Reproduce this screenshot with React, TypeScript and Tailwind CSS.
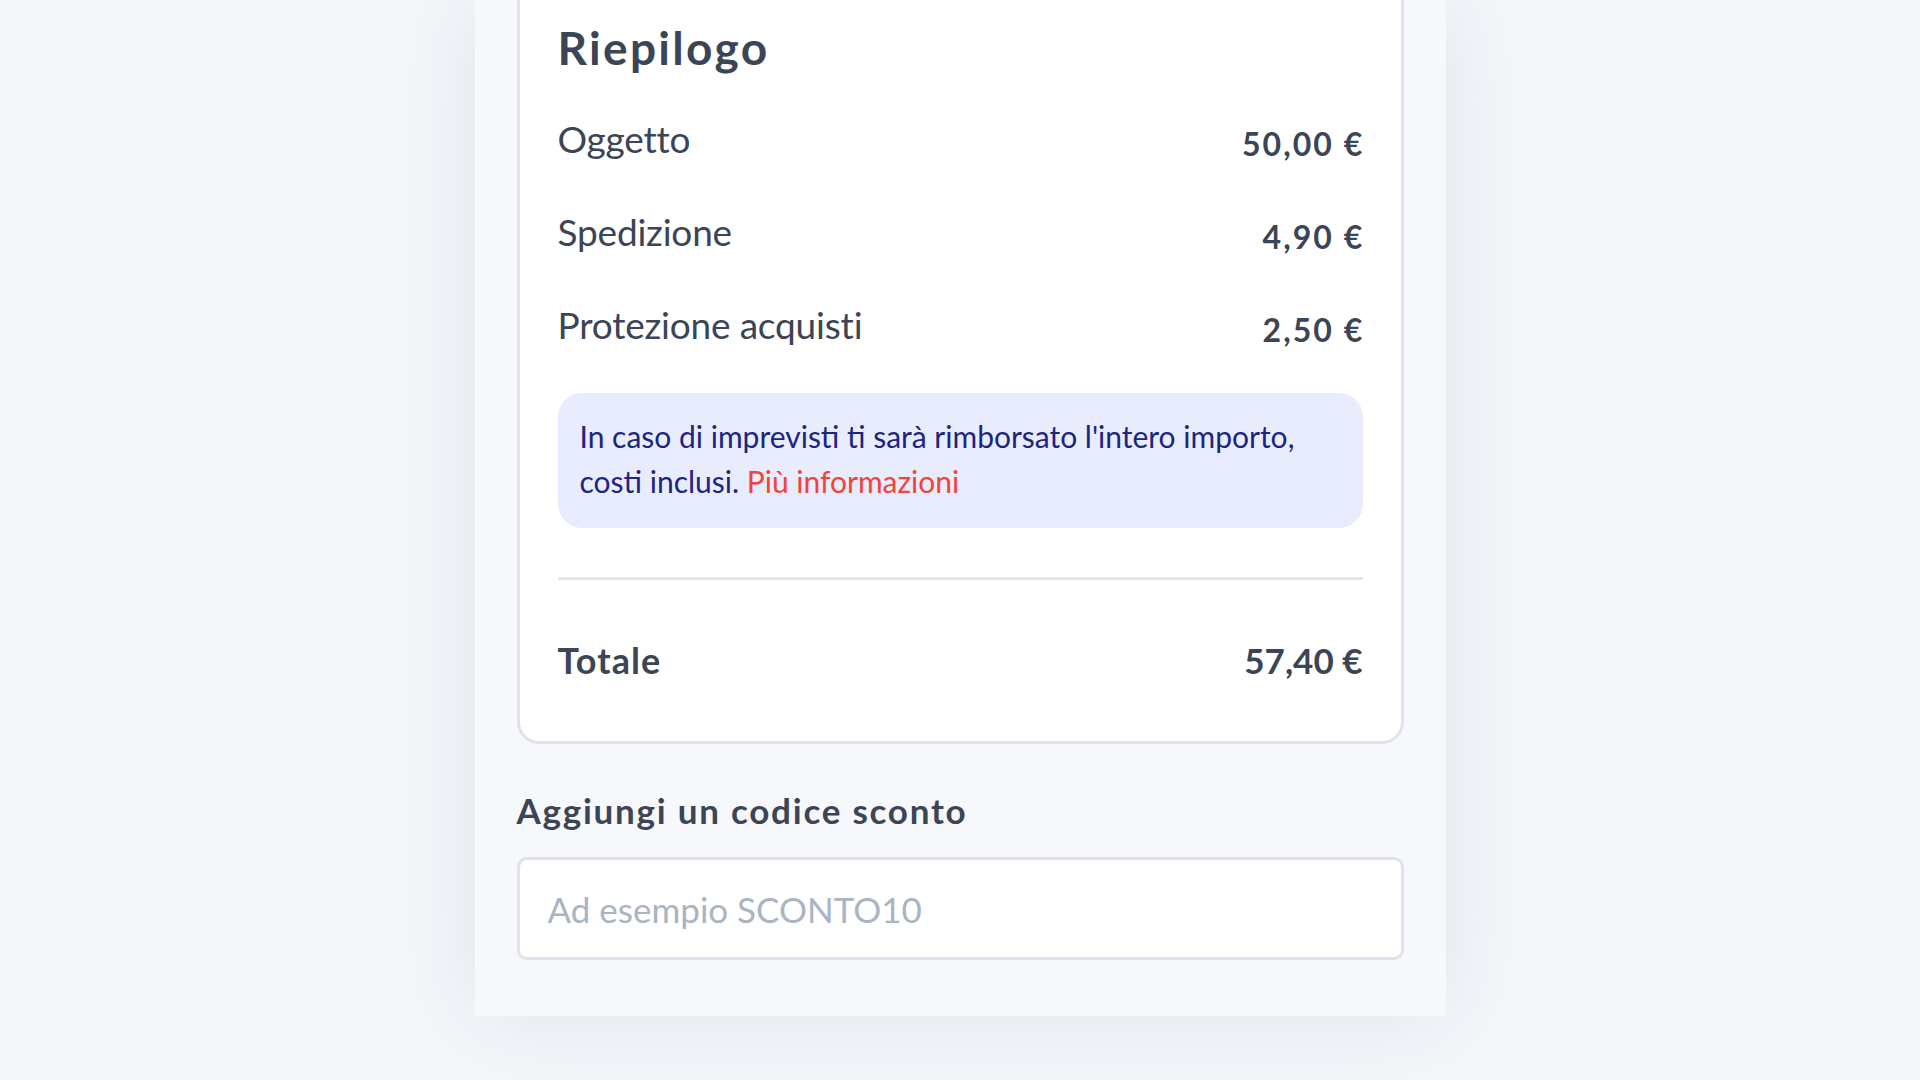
const rows = [
  { label: "Oggetto", value: "50,00 €" },
  { label: "Spedizione", value: "4,90 €" },
  { label: "Protezione acquisti", value: "2,50 €" },
];

export default function App() {
  return (
    <div
      className="h-[1080px] w-full overflow-hidden bg-[#f6f7fb] flex justify-center text-[#3b4556]"
      style={{ fontFamily: "Lato, 'Noto Sans', sans-serif" }}
    >
      <div className="w-[971px] h-[1016px] bg-[#f7f8fc] px-[42px] pb-[56px] shadow-[0_0_90px_rgba(30,40,80,0.1)] flex flex-col">
        <div className="-mt-[40px] bg-white border-[3px] border-[#dfe2ee] rounded-[22px] px-[38px] pt-[58px] pb-[59px]">
          <h2 className="text-[46px] leading-[54px] font-bold tracking-[0.05em]">Riepilogo</h2>

          <div className="mt-[42px] flex flex-col gap-[49px]">
            {rows.map((r) => (
              <div key={r.label} className="h-[44px] flex justify-between items-baseline">
                <span className="text-[37px] leading-[44px] tracking-[-0.005em]">{r.label}</span>
                <span className="text-[32px] leading-[44px] font-bold tracking-[0.065em] -mr-[2px] translate-y-[3px]">
                  {r.value}
                </span>
              </div>
            ))}
          </div>

          <div className="mt-[46px] bg-[#e9ecfd] rounded-[24px] px-[22px] pt-[21px] pb-[24px] text-[30px] leading-[45px] text-[#1c2580]">
            In caso di imprevisti ti sarà rimborsato l'intero importo,
            <br />
            costi inclusi. <span className="text-[#f2433b]">Più informazioni</span>
          </div>

          <div className="mt-[49px] h-[3px] bg-[#e3e6f0]" />

          <div className="mt-[58px] h-[44px] flex justify-between items-baseline font-bold">
            <span className="text-[36px] leading-[44px] tracking-[0.03em]">Totale</span>
            <span className="text-[35px] leading-[44px]">57,40 €</span>
          </div>
        </div>

        <h3 className="mt-[45px] text-[35px] leading-[42px] font-bold tracking-[0.05em]">Aggiungi un codice sconto</h3>

        <input
          type="text"
          placeholder="Ad esempio SCONTO10"
          className="mt-[26px] h-[104px] w-full bg-white border-[3px] border-[#dfe2ee] rounded-[10px] px-[28px] text-[35px] text-[#3b4556] placeholder:text-[#aab4c3] outline-none"
          style={{ fontFamily: "Lato, 'Noto Sans', sans-serif" }}
        />
      </div>
    </div>
  );
}
